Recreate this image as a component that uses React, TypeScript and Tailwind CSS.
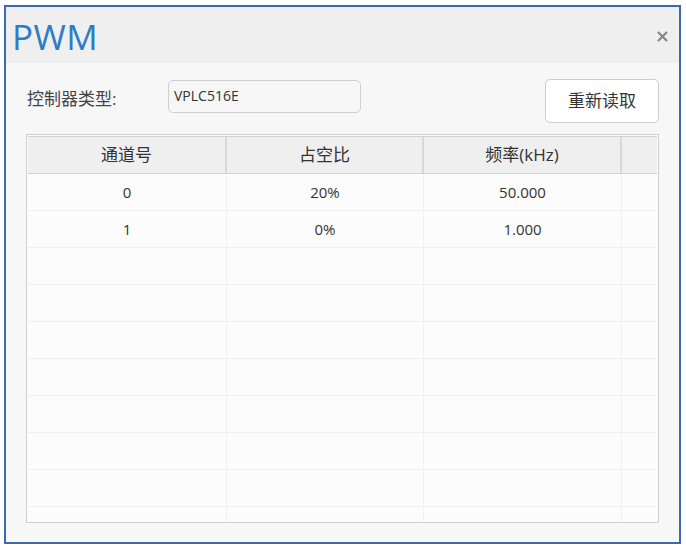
import React from 'react';

const rows = [
  { ch: '0', duty: '20%', freq: '50.000' },
  { ch: '1', duty: '0%', freq: '1.000' },
];

const EMPTY_ROWS = 8;

export default function App() {
  const font = { fontFamily: '"Open Sans", "Noto Sans CJK SC", sans-serif' };

  return (
    <div className="w-[686px] h-[549px] bg-white pl-[4px] pt-[5px]" style={font}>
      <div className="w-[677px] h-[539px] border-2 border-[#3b6aae] flex flex-col bg-[#f7f7f7]">
        {/* Title bar */}
        <div className="shrink-0 h-[56px] bg-[#efefef] flex items-center justify-between pl-[6px] pr-[11px]">
          <span className="text-[35px] leading-none text-[#2d7cc9] tracking-[0.5px] mt-[3px]">PWM</span>
          <svg width="11" height="11" viewBox="0 0 11 11" className="mt-[3px]">
            <path d="M1 1 L10 10 M10 1 L1 10" stroke="#868686" strokeWidth="2.2" />
          </svg>
        </div>

        {/* Body */}
        <div className="flex-1 min-h-0 flex flex-col px-[20px] pt-[16px] pb-[19px]">
          <div className="shrink-0 flex items-start h-[44px]">
            <span className="text-[17px] text-[#444] mt-[7px] ml-[1px] w-[141px]">控制器类型:</span>
            <div className="mt-[1px] w-[193px] h-[33px] rounded-[5px] border border-[#cfcfcf] bg-[#f6f6f6] pl-[5px] pt-[4px] text-[14px] text-[#333]">
              VPLC516E
            </div>
            <div className="flex-1" />
            <button className="w-[114px] h-[44px] rounded-[5px] border border-[#cdcdcd] bg-white text-[17px] text-[#333]">
              重新读取
            </button>
          </div>

          <div className="mt-[11px] flex-1 min-h-0 border border-[#cfcfcf] bg-[#fcfcfc] overflow-hidden p-[1px]">
            <div className="grid grid-cols-[199px_197px_198px_1fr] h-[38px] bg-[#efefef] border-t border-b border-[#d2d2d2] text-[17px] text-[#333]">
              <div className="flex items-center justify-center border-r-2 border-[#d8d8d8]">通道号</div>
              <div className="flex items-center justify-center border-r-2 border-[#d8d8d8]">占空比</div>
              <div className="flex items-center justify-center border-r-2 border-[#d8d8d8]">频率(kHz)</div>
              <div />
            </div>
            {rows.map((r) => (
              <div key={r.ch} className="grid grid-cols-[199px_197px_198px_1fr] h-[37px] border-b border-[#efefef] text-[15px] text-[#333]">
                <div className="flex items-center justify-center border-r border-[#f1f1f1]">{r.ch}</div>
                <div className="flex items-center justify-center border-r border-[#f1f1f1]">{r.duty}</div>
                <div className="flex items-center justify-center border-r border-[#f1f1f1]">{r.freq}</div>
                <div />
              </div>
            ))}
            {Array.from({ length: EMPTY_ROWS }).map((_, i) => (
              <div key={i} className="grid grid-cols-[199px_197px_198px_1fr] h-[37px] border-b border-[#efefef]">
                <div className="border-r border-[#f1f1f1]" />
                <div className="border-r border-[#f1f1f1]" />
                <div className="border-r border-[#f1f1f1]" />
                <div />
              </div>
            ))}
          </div>
        </div>
      </div>
    </div>
  );
}
